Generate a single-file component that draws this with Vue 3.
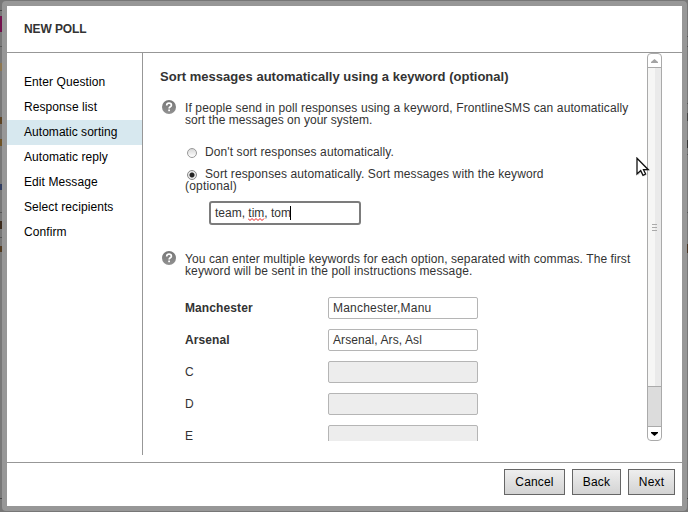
<script setup>
import { ref } from 'vue'

const steps = ['Enter Question', 'Response list', 'Automatic sorting', 'Automatic reply', 'Edit Message', 'Select recipients', 'Confirm']
const current = ref('Automatic sorting')
const options = [
  { label: 'Manchester', keywords: 'Manchester,Manu', tracking: 0.2 },
  { label: 'Arsenal', keywords: 'Arsenal, Ars, Asl', tracking: 0.09 },
  { label: 'C', keywords: '' },
  { label: 'D', keywords: '' },
  { label: 'E', keywords: '' }
]
const helps = {
  sort: [
    { text: 'If people send in poll responses using a keyword, FrontlineSMS can automatically', tracking: 0.114 },
    { text: 'sort the messages on your system.', tracking: 0.04 }
  ],
  keywords: [
    { text: 'You can enter multiple keywords for each option, separated with commas. The first', tracking: 0.088 },
    { text: 'keyword will be sent in the poll instructions message.', tracking: 0.11 }
  ]
}
const edges = {
  left: [
    { y: 10, h: 1, c: '#444' }, { y: 16, h: 16, c: '#72114c' }, { y: 46, h: 1, c: '#555' },
    { y: 63, h: 8, c: '#8c7650' }, { y: 117, h: 7, c: '#5c4424' }, { y: 139, h: 7, c: '#6e5326' },
    { y: 184, h: 6, c: '#303c60' }, { y: 212, h: 1, c: '#555' }, { y: 221, h: 8, c: '#3b2a1b' },
    { y: 237, h: 1, c: '#555' }, { y: 246, h: 6, c: '#533c22' }, { y: 498, h: 1, c: '#444' }
  ],
  right: [
    { y: 36, h: 1, c: '#555' }, { y: 46, h: 1, c: '#555' }, { y: 103, h: 1, c: '#555' },
    { y: 113, h: 8, c: '#444' }, { y: 140, h: 8, c: '#333' }, { y: 154, h: 1, c: '#555' },
    { y: 212, h: 1, c: '#555' }, { y: 244, h: 9, c: '#4a3422' }, { y: 498, h: 1, c: '#444' }
  ]
}
</script>

<template>
  <div class="page">
    <div v-for="(marks, side) in edges" :key="side" class="edge" :class="side">
      <i v-for="m in marks" :key="m.y" :style="{ top: m.y + 'px', height: m.h + 'px', background: m.c }"></i>
    </div>
    <section class="dialog">
      <header class="head">NEW POLL</header>
      <div class="body">
        <nav class="steps">
          <a v-for="s in steps" :key="s" :class="{ active: s === current }">{{ s }}</a>
        </nav>
        <main class="pane">
          <div class="content">
            <h2>Sort messages automatically using a keyword (optional)</h2>
            <div class="help first">
              <svg class="q" viewBox="0 0 14 14">
                <defs><linearGradient id="ball" x1="0" y1="0" x2="0" y2="1"><stop offset="0" stop-color="#757575" /><stop offset="1" stop-color="#929292" /></linearGradient></defs>
                <circle cx="7" cy="7" r="7" fill="url(#ball)" />
                <path d="M4.7 5.5C4.7 3.9 5.6 3.2 7 3.2S9.4 4 9.4 5.2C9.4 6.8 7.1 6.8 7.1 8.5" fill="none" stroke="#fff" stroke-width="1.7" />
                <rect x="6.2" y="9.5" width="1.8" height="1.7" fill="#fff" />
              </svg>
              <p><span v-for="l in helps.sort" :key="l.text" :style="{ letterSpacing: l.tracking + 'px' }">{{ l.text }}</span></p>
            </div>
            <div class="choice one"><i class="radio"></i><span>Don't sort responses automatically.</span></div>
            <div class="choice two"><i class="radio on"></i><span>Sort responses automatically. Sort messages with the keyword</span></div>
            <div class="wrapline">(optional)</div>
            <div class="field focus">team,&nbsp;<span class="typo">tim<svg viewBox="0 0 17 3"><path d="M0 .5L2 2.5L4 .5L6 2.5L8 .5L10 2.5L12 .5L14 2.5L16 .5" fill="none" stroke="#e51c1c" /></svg></span>, tom<i class="caret"></i></div>
            <div class="help second">
              <svg class="q" viewBox="0 0 14 14">
                <circle cx="7" cy="7" r="7" fill="url(#ball)" />
                <path d="M4.7 5.5C4.7 3.9 5.6 3.2 7 3.2S9.4 4 9.4 5.2C9.4 6.8 7.1 6.8 7.1 8.5" fill="none" stroke="#fff" stroke-width="1.7" />
                <rect x="6.2" y="9.5" width="1.8" height="1.7" fill="#fff" />
              </svg>
              <p><span v-for="l in helps.keywords" :key="l.text" :style="{ letterSpacing: l.tracking + 'px' }">{{ l.text }}</span></p>
            </div>
            <div class="options">
              <div v-for="o in options" :key="o.label" class="option">
                <label :class="{ filled: o.keywords }">{{ o.label }}</label>
                <div class="field" :class="{ disabled: !o.keywords }" :style="{ letterSpacing: (o.tracking || 0) + 'px' }">{{ o.keywords }}</div>
              </div>
            </div>
          </div>
          <div class="scrollbar">
            <div class="arrow up"><svg viewBox="0 0 7 4"><path d="M0 4V3L3.5 0L7 3V4Z" fill="#a4a4a4" /></svg></div>
            <div class="thumb"><i></i><i></i><i></i></div>
            <div class="track"></div>
            <div class="arrow down"><svg viewBox="0 0 7 4"><path d="M0 0H7V1L3.5 4L0 1Z" fill="#000" /></svg></div>
          </div>
        </main>
      </div>
      <footer class="foot">
        <button class="cancel">Cancel</button>
        <button class="back">Back</button>
        <button class="next">Next</button>
      </footer>
    </section>
    <svg class="cursor" viewBox="0 0 14 21">
      <path d="M2 2V18.5L5.5 15L7.8 19.5L10.6 18.2L8.6 13.7H13Z" fill="#999" opacity=".35" />
      <path d="M1 1.2V17L4.7 13.6L7 18.3L9.6 17L7.5 12.7H12.3Z" fill="#fff" stroke="#111" stroke-width="1.3" />
    </svg>
  </div>
</template>

<style>
body { margin: 0; overflow: hidden; }
</style>

<style scoped>
* { box-sizing: border-box; }
.page { position: relative; width: 688px; height: 512px; padding: 1px 1px 1px 2px; background: #777; overflow: hidden; font: 12px/12px "Liberation Sans", Arial, sans-serif; color: #333; }
.edge { position: absolute; top: 0; width: 2px; height: 512px; }
.edge.left { left: 0; }
.edge.right { right: 0; width: 1px; }
.edge i { position: absolute; left: 0; width: 100%; }
.dialog { position: relative; display: flex; flex-direction: column; width: 685px; height: 510px; border: 5px solid #979797; border-radius: 4px; background: #fff; }
.head { height: 47px; flex: none; padding: 0 17px; border-bottom: 1px solid #979797; font-weight: bold; line-height: 47px; letter-spacing: -.1px; }
.body { display: flex; height: 409px; flex: none; }
.steps { width: 136px; height: 402px; flex: none; padding-top: 17px; border-right: 1px solid #979797; }
.steps a { display: block; height: 25px; padding-left: 17px; line-height: 24px; color: #000; white-space: nowrap; letter-spacing: .08px; }
.steps a.active { background: #d7e8ef; letter-spacing: .04px; }
.pane { display: flex; width: 519px; height: 388px; overflow: hidden; }
.content { width: 504px; height: 388px; flex: none; padding: 17px 0 0 17px; overflow: hidden; white-space: nowrap; }
h2 { margin: 0; font-size: 13px; line-height: 14px; letter-spacing: .02px; }
.help { display: flex; padding-left: 2px; gap: 9px; }
.help p { margin: 2px 0 0; }
.help span { display: block; }
.first { margin-top: 16px; }
.q { width: 14px; height: 14px; flex: none; }
.choice { display: flex; height: 12px; margin-left: 27px; gap: 8px; align-items: center; letter-spacing: .1px; }
.one { margin-top: 20px; }
.two { margin-top: 10px; }
.radio { width: 10px; height: 10px; flex: none; position: relative; top: 1px; border: 1px solid #999; border-radius: 50%; background: linear-gradient(#d8d8d8, #fff); }
.radio.on { border-color: #888; background: radial-gradient(circle, #222 0 2px, #e8e8e8 3px); }
.wrapline { margin-left: 25px; letter-spacing: .2px; }
.field { width: 150px; height: 22px; padding-left: 4px; border: 1px solid #b5b5b5; border-radius: 2px; line-height: 20px; background: #fff; }
.field.disabled { background: #ededed; }
.field.focus { display: flex; width: 152px; height: 24px; margin: 9px 0 0 49px; border: 2px solid #7c7c7c; border-radius: 3px; white-space: pre; }
.typo { position: relative; }
.typo svg { position: absolute; left: 0; top: 15px; width: 17px; height: 3px; }
.caret { width: 1px; height: 14px; margin: 3px 0 0 -1px; background: #000; }
.second { margin-top: 26px; }
.options { display: flex; flex-direction: column; gap: 10px; margin: 20px 0 0 25px; }
.option { display: flex; flex: none; }
.option label { width: 143px; line-height: 22px; }
.option .filled { font-weight: bold; letter-spacing: .1px; }
.scrollbar { display: flex; flex-direction: column; width: 15px; height: 388px; flex: none; border: 1px solid #aaa; border-radius: 4px; overflow: hidden; }
.arrow { display: flex; height: 13px; flex: none; align-items: center; justify-content: center; }
.arrow svg { width: 7px; height: 4px; }
.thumb { display: flex; flex-direction: column; align-items: center; justify-content: center; gap: 2px; height: 320px; flex: none; border: 1px solid #aaa; border-width: 1px 0; background: linear-gradient(90deg, #f6f6f5 0 7px, #eaeaea 7px); }
.thumb i { width: 5px; height: 1px; background: #aaa; }
.track { flex: 1; background: #dcdcdc; border-bottom: 1px solid #aaa; }
.foot { display: flex; height: 44px; flex: none; justify-content: flex-end; gap: 7px; padding: 6px 7px 0 0; border-top: 1px solid #979797; }
button { height: 26px; padding: 0 0 1px; border: 1px solid #666; background: linear-gradient(#eee, #d3d3d3); font: 12px "Liberation Sans", Arial, sans-serif; color: #000; letter-spacing: .15px; }
.cancel { width: 61px; }
.back { width: 49px; }
.next { width: 47px; }
.cursor { position: absolute; left: 636px; top: 157px; width: 14px; height: 21px; }
</style>
